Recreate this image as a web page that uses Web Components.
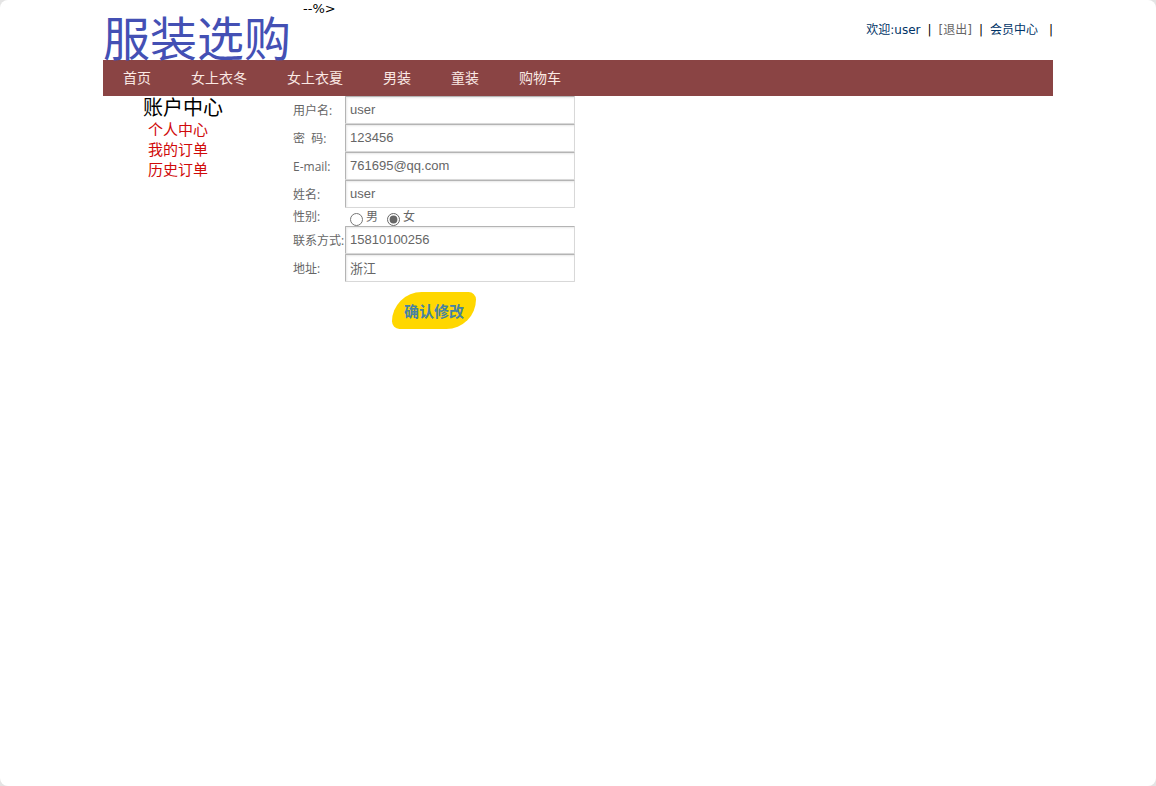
<!DOCTYPE html>
<html lang="zh-CN">
<head>
<meta charset="utf-8">
<title>会员中心</title>
<style>
  html {
    background: #e4e4e4;
  }
  body {
    margin: 0;
    min-height: 100vh;
    background: #fff;
    border-radius: 8px;
    font: 12px/18px "Open Sans", "Noto Sans CJK SC", sans-serif;
    color: #000;
  }
</style>
</head>
<body>
<shop-page>
  <shop-header slot="header" user="user"></shop-header>
  <shop-nav slot="nav">
    <a href="#home">首页</a>
    <a href="#winter">女上衣冬</a>
    <a href="#summer">女上衣夏</a>
    <a href="#men">男装</a>
    <a href="#kids">童装</a>
    <a href="#cart">购物车</a>
  </shop-nav>
  <account-menu slot="side" heading="账户中心">
    <a href="#profile">个人中心</a>
    <a href="#orders">我的订单</a>
    <a href="#history">历史订单</a>
  </account-menu>
  <profile-form>
    <form-field label="用户名:" value="user"></form-field>
    <form-field label="密&nbsp; 码:" value="123456"></form-field>
    <form-field label="E-mail:" value="761695@qq.com"></form-field>
    <form-field label="姓名:" value="user"></form-field>
    <gender-field label="性别:" value="女"></gender-field>
    <form-field label="联系方式:" value="15810100256"></form-field>
    <form-field label="地址:" value="浙江"></form-field>
  </profile-form>
</shop-page>

<script>
class ShopPage extends HTMLElement {
  constructor() {
    super();
    this.attachShadow({ mode: 'open' });

    this.shadowRoot.innerHTML = /* html */ `
    <style>
        :host {
            display: block;
            max-width: 950px;
            margin: 0 auto;
        }
        main {
            display: grid;
            grid-template-columns: 190px 1fr;
        }
    </style>
    <slot name="header"></slot>
    <slot name="nav"></slot>
    <main>
        <slot name="side"></slot>
        <slot></slot>
    </main>
        `;
  }
}

class ShopHeader extends HTMLElement {
  constructor() {
    super();
    this.attachShadow({ mode: 'open' });

    this.shadowRoot.innerHTML = /* html */ `
    <style>
        :host {
            display: flex;
            height: 60px;
            font-family: "DejaVu Sans", "Noto Sans CJK SC", sans-serif;
        }
        a {
            color: #036;
            text-decoration: none;
        }
        .logo {
            width: 200px;
            padding-top: 14px;
            box-sizing: border-box;
            font: 47px/44px KaiTi, "Noto Sans CJK SC", sans-serif;
            color: #4450b4;
            white-space: nowrap;
        }
        .note {
            font-size: 13px;
        }
        .links {
            display: flex;
            gap: 7px;
            margin-left: auto;
            padding-top: 21px;
        }
        .links .logout {
            color: #666;
        }
        .last {
            margin-left: 4px;
        }
    </style>
    <a class="logo" href="#home">服装选购</a>
    <span class="note">--%&gt;</span>
    <div class="links">
        <a href="#me">欢迎:<span id="user"></span></a>
        <span>|</span>
        <a class="logout" href="#logout">[退出]</a>
        <span>|</span>
        <a href="#member">会员中心</a>
        <span class="last">|</span>
    </div>
        `;
  }

  connectedCallback() {
    this.shadowRoot.querySelector('#user').textContent = this.getAttribute('user');
  }
}

class ShopNav extends HTMLElement {
  constructor() {
    super();
    this.attachShadow({ mode: 'open' });

    this.shadowRoot.innerHTML = /* html */ `
    <style>
        :host {
            display: block;
            background-color: #8a4444;
        }
        nav {
            display: flex;
            gap: 40px;
            padding: 0 20px;
            font-size: 14px;
            line-height: 36px;
        }
        ::slotted(a) {
            color: #fbe9e4;
            text-decoration: none;
        }
    </style>
    <nav><slot></slot></nav>
        `;
  }
}

class AccountMenu extends HTMLElement {
  constructor() {
    super();
    this.attachShadow({ mode: 'open' });

    this.shadowRoot.innerHTML = /* html */ `
    <style>
        :host {
            display: block;
            padding-left: 40px;
            line-height: 20px;
        }
        h2 {
            margin: 0;
            font-size: 20px;
            font-weight: normal;
            line-height: 23px;
        }
        nav {
            padding-left: 5px;
            font-size: 15px;
        }
        ::slotted(a) {
            display: block;
            color: #d00a0a;
            text-decoration: none;
        }
    </style>
    <h2></h2>
    <nav><slot></slot></nav>
        `;
  }

  connectedCallback() {
    this.shadowRoot.querySelector('h2').textContent = this.getAttribute('heading');
  }
}

class ProfileForm extends HTMLElement {
  constructor() {
    super();
    this.attachShadow({ mode: 'open' });

    this.shadowRoot.innerHTML = /* html */ `
    <style>
        :host {
            display: block;
            max-width: 282px;
            color: #666;
        }
        button {
            display: block;
            margin: 10px auto 0;
            padding: 2px 12px 0;
            border: 0;
            border-radius: 32px 8px;
            background-color: #ffd700;
            color: #4682a4;
            font: bold 15px/35px "Open Sans", "Noto Sans CJK SC", sans-serif;
            cursor: pointer;
        }
    </style>
    <form>
        <slot></slot>
        <button type="button">确认修改</button>
    </form>
        `;
  }
}

class FormField extends HTMLElement {
  constructor() {
    super();
    this.attachShadow({ mode: 'open' });

    this.shadowRoot.innerHTML = /* html */ `
    <style>
        :host {
            display: grid;
            grid-template-columns: 52px 1fr;
            align-items: center;
        }
        label {
            padding-top: 2px;
            white-space: nowrap;
        }
        input {
            box-sizing: border-box;
            width: 100%;
            height: 28px;
            padding: 0 4px 2px;
            border: 1px solid;
            border-color: #b4b4b4 #d8d8d8 #d8d8d8 #b4b4b4;
            border-radius: 1px;
            box-shadow: inset 1px 1px 2px #e8e8e8;
            color: #666;
            font: 13px "Liberation Sans", "Noto Sans CJK SC", sans-serif;
        }
    </style>
    <label for="field"></label>
    <input id="field" type="text">
        `;
  }

  connectedCallback() {
    this.shadowRoot.querySelector('label').textContent = this.getAttribute('label');
    this.shadowRoot.querySelector('input').value = this.getAttribute('value');
  }
}

class GenderField extends HTMLElement {
  constructor() {
    super();
    this.attachShadow({ mode: 'open' });

    this.shadowRoot.innerHTML = /* html */ `
    <style>
        :host {
            display: block;
        }
        div {
            display: grid;
            grid-template-columns: 57px 37px 1fr;
        }
        label {
            display: flex;
            gap: 3px;
        }
        input {
            width: 13px;
            height: 13px;
            margin: 5px 0 0;
            accent-color: #666;
        }
    </style>
    <div role="radiogroup" aria-labelledby="caption">
        <span id="caption"></span>
        <label><input type="radio" name="gender" value="男">男</label>
        <label><input type="radio" name="gender" value="女">女</label>
    </div>
        `;
  }

  connectedCallback() {
    this.shadowRoot.querySelector('#caption').textContent = this.getAttribute('label');
    this.shadowRoot.querySelectorAll('input').forEach((input) => {
      input.checked = input.value === this.getAttribute('value');
    });
  }
}

customElements.define('shop-page', ShopPage);
customElements.define('shop-header', ShopHeader);
customElements.define('shop-nav', ShopNav);
customElements.define('account-menu', AccountMenu);
customElements.define('profile-form', ProfileForm);
customElements.define('form-field', FormField);
customElements.define('gender-field', GenderField);
</script>
</body>
</html>
